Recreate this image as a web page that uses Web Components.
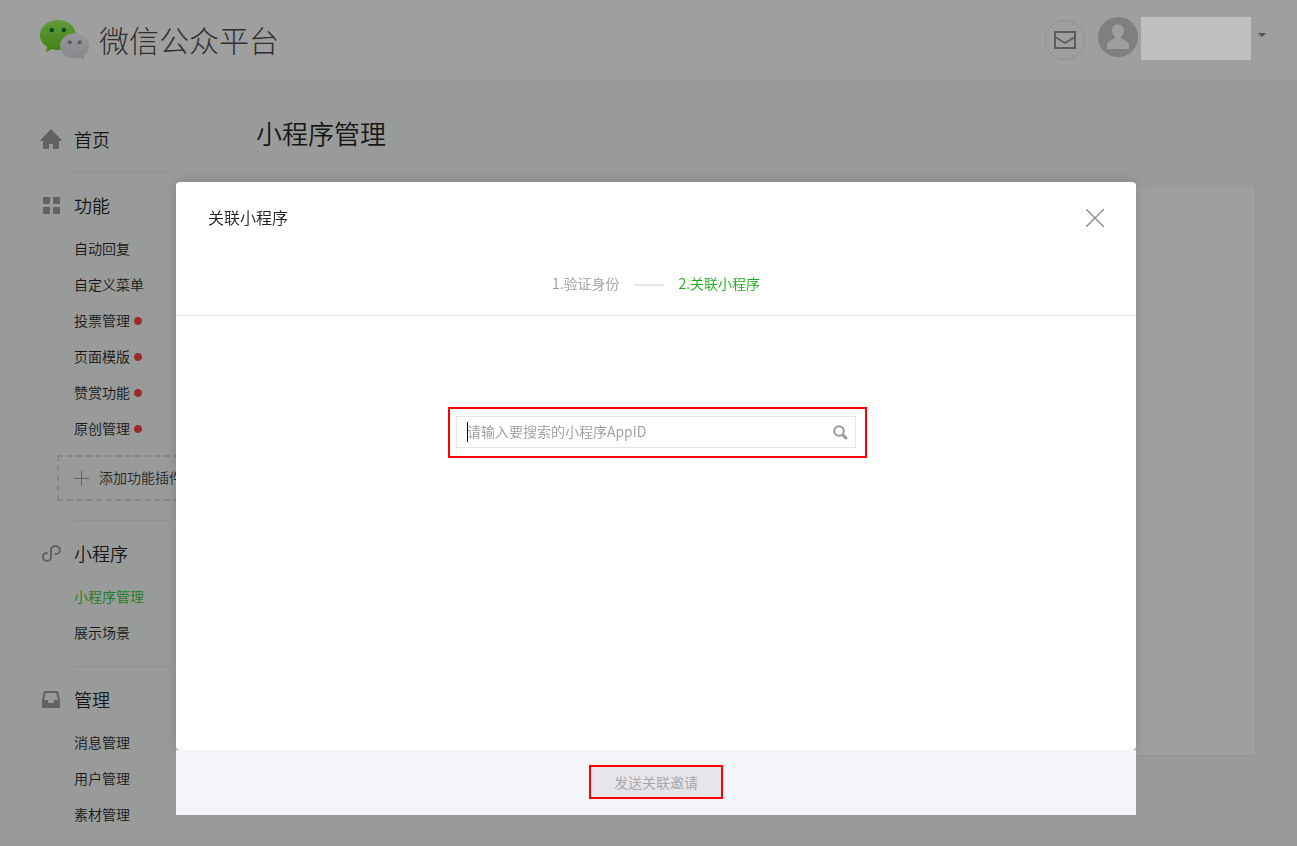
<!DOCTYPE html>
<html lang="zh-CN">
<head>
<meta charset="UTF-8">
<meta name="viewport" content="width=device-width, initial-scale=1">
<title>微信公众平台</title>
<style>
  :root {
    --page: #999b9a;
    --surface: #9f9f9f;
    --line: #8f9190;
    --icon: #616262;
    --text: #161616;
    --green: #1aad19;
    --mark: #f00;
  }

  body {
    margin: 0;
    min-height: 100vh;
    background: var(--page);
    color: var(--text);
    font: 350 14px/20px "Noto Sans CJK SC", "Noto Sans", sans-serif;
  }
</style>
</head>
<body>
<mp-app></mp-app>

<script>
const define = (name, html) => {
  const template = document.createElement('template');
  template.innerHTML = html;

  customElements.define(name, class extends HTMLElement {
    constructor() {
      super();
      this.attachShadow({ mode: 'open' }).appendChild(template.content.cloneNode(true));
    }
  });
};

// --- Header ---
define('mp-logo', `
  <style>
    :host { display: block; }
    a {
      display: flex;
      align-items: center;
      gap: 9px;
      color: #303030;
      font-size: 30px;
      font-weight: 300;
      line-height: 40px;
      text-decoration: none;
    }
    span { padding-bottom: 2px; }
    svg { display: block; }
  </style>
  <a href="#">
    <svg width="50" height="44" viewBox="0 0 50 44" aria-hidden="true">
      <defs>
        <linearGradient id="green" x1="0" y1="0" x2="0" y2="1">
          <stop offset="0" stop-color="#619a3b"/>
          <stop offset="1" stop-color="#428113"/>
        </linearGradient>
        <linearGradient id="gray" x1="0" y1="0" x2="0" y2="1">
          <stop offset="0" stop-color="#95979a"/>
          <stop offset="1" stop-color="#85878a"/>
        </linearGradient>
      </defs>
      <path fill="url(#green)" d="M18 2C8 2 0 8.500 0 17c0 5 2.700 9 7 11.800L6 34l6-3c2 .6 4 1 6 1 10 0 17.800-6.500 17.800-15S28 2 18 2z"/>
      <path fill="url(#gray)" d="M34.600 15.300c-8 0-14.600 5.500-14.600 12.500s6.600 12.500 14.600 12.500c2 0 3.700-.3 5.300-.9l4.800 2.600-1-4.200c3.500-2.400 5.600-6 5.600-10 0-7-6.500-12.500-14.700-12.500z"/>
      <g fill="#064c1c"><circle cx="11.800" cy="12" r="2.200"/><circle cx="23.800" cy="12" r="2.200"/></g>
      <g fill="#5a5c5f"><circle cx="29.800" cy="24.200" r="2"/><circle cx="39.700" cy="24.200" r="2"/></g>
    </svg>
    <span>微信公众平台</span>
  </a>
`);

define('mp-account', `
  <style>
    :host { display: flex; align-items: center; gap: 13px; }
    button { border: 0; padding: 0; background: none; color: inherit; cursor: pointer; }
    svg { display: block; }
    .mail {
      box-sizing: border-box;
      width: 40px;
      height: 40px;
      display: grid;
      place-items: center;
      border: 1px solid #8f8f8f;
      border-radius: 50%;
    }
    .account { display: flex; align-items: flex-start; height: 46px; }
    .name { width: 110px; height: 43px; margin: 0 7px 0 3px; background: #bfbfbf; }
    .arrow { margin-top: 16px; border: 4px solid transparent; border-top-color: #505050; border-bottom: 0; }
  </style>
  <button class="mail" aria-label="通知">
    <svg width="22" height="18" viewBox="0 0 22 18" fill="none" stroke="#5c5c5c" stroke-width="2">
      <path d="M1 1h20v16H1z"/>
      <path d="M1 6l10 6 10-6" stroke-width="1.800"/>
    </svg>
  </button>
  <button class="account" aria-label="帐号">
    <svg width="40" height="40" viewBox="0 0 40 40">
      <circle cx="20" cy="20" r="20" fill="#7f7f7f"/>
      <path fill="#9f9f9f" d="M9 32v-3c0-4 3-5.500 8-7.500v-1.800c-1.700-1.500-3-3.500-3-6.200 0-3.500 2.500-6 6-6s6 2.500 6 6c0 2.700-1.300 4.700-3 6.200v1.800c5 2 8 3.500 8 7.500v3z"/>
    </svg>
    <span class="name"></span>
    <span class="arrow"></span>
  </button>
`);

define('mp-header', `
  <style>
    :host {
      display: flex;
      align-items: center;
      justify-content: space-between;
      height: 80px;
      padding: 0 31px 0 40px;
      background: var(--surface);
      box-shadow: 0 1px 2px rgba(0, 0, 0, 0.03);
    }
  </style>
  <mp-logo></mp-logo>
  <mp-account></mp-account>
`);

// --- Side navigation ---
define('mp-section', `
  <style>
    :host { display: block; padding: 16px 0 0 34px; }
    h2 {
      display: flex;
      align-items: center;
      height: 34px;
      margin: 0 0 0 -34px;
      font-size: 18px;
      font-weight: 350;
    }
    .icon { display: flex; width: 34px; color: var(--icon); }
    .title { padding-bottom: 2px; }
    .rule { border-bottom: 1px solid var(--line); padding-top: 15px; }
    :host(:last-child) .rule { display: none; }
  </style>
  <h2>
    <span class="icon"><slot name="icon"></slot></span>
    <span class="title"><slot name="title"></slot></span>
  </h2>
  <slot></slot>
  <div class="rule"></div>
`);

define('mp-links', `
  <style>
    :host { display: block; padding-top: 8px; }
    nav { display: flex; flex-direction: column; }
    ::slotted(a) {
      box-sizing: border-box;
      display: flex;
      align-items: center;
      height: 36px;
      padding-bottom: 2px;
      color: inherit;
      text-decoration: none;
    }
    ::slotted(a.current) { color: #187b22; }
    ::slotted(a.new) { background: radial-gradient(circle at 64px 18px, #9c2a2a 3.500px, transparent 4.500px); }
  </style>
  <nav><slot></slot></nav>
`);

define('mp-add', `
  <style>
    :host { display: block; margin: 8px 0 4px -17px; }
    button {
      box-sizing: border-box;
      display: flex;
      align-items: center;
      gap: 10px;
      width: 152px;
      height: 46px;
      padding: 0 15px;
      border: 2px dashed #858786;
      background: none;
      color: #272727;
      font: inherit;
      white-space: nowrap;
    }
    span { padding-bottom: 2px; }
    svg { flex: none; }
  </style>
  <button>
    <svg width="15" height="15" viewBox="0 0 15 15" stroke="#626464"><path d="M7.500 0v15M0 7.500h15"/></svg>
    <span><slot></slot></span>
  </button>
`);

define('mp-sidebar', `
  <style>
    :host { display: block; padding: 27px 0 13px 40px; }
  </style>
  <mp-section>
    <svg slot="icon" width="22" height="22" viewBox="0 0 22 22" fill="currentColor">
      <path d="M11 0L.5 11c0 .6.300 1 1 1H3v7c0 .6.400 1 1 1h5v-5h4v5h5c.6 0 1-.4 1-1v-7h1.500c.7 0 1-.4 1-1z"/>
    </svg>
    <span slot="title">首页</span>
  </mp-section>
  <mp-section>
    <svg slot="icon" width="22" height="22" viewBox="0 0 22 22" fill="currentColor">
      <rect x="3" y="2" width="7" height="7" rx="1"/><rect x="13" y="2" width="7" height="7" rx="1"/>
      <rect x="3" y="12" width="7" height="7" rx="1"/><rect x="13" y="12" width="7" height="7" rx="1"/>
    </svg>
    <span slot="title">功能</span>
    <mp-links>
      <a href="#">自动回复</a>
      <a href="#">自定义菜单</a>
      <a href="#" class="new">投票管理</a>
      <a href="#" class="new">页面模版</a>
      <a href="#" class="new">赞赏功能</a>
      <a href="#" class="new">原创管理</a>
    </mp-links>
    <mp-add>添加功能插件</mp-add>
  </mp-section>
  <mp-section>
    <svg slot="icon" width="22" height="22" viewBox="0 0 22 22" fill="none" stroke="currentColor" stroke-width="2" stroke-linecap="round">
      <path d="M7 10c-2.300 0-4 1.500-4 3.700S4.800 18 7 18s4-1.700 4-4V7c0-2.300 1.800-4 4.200-4S20 4.700 20 6.900 18 11 15.500 11"/>
    </svg>
    <span slot="title">小程序</span>
    <mp-links>
      <a href="#" class="current">小程序管理</a>
      <a href="#">展示场景</a>
    </mp-links>
  </mp-section>
  <mp-section>
    <svg slot="icon" width="22" height="22" viewBox="0 0 22 22" fill="currentColor">
      <path fill-rule="evenodd" d="M5 2h12c.6 0 1 .3 1.200.8L20 11v7c0 .6-.4 1-1 1H3c-.6 0-1-.4-1-1v-7l1.800-8.200C4 2.300 4.400 2 5 2zm.800 2L4 11h4v2c0 .6.400 1 1 1h4c.6 0 1-.4 1-1v-2h4l-1.800-7z"/>
    </svg>
    <span slot="title">管理</span>
    <mp-links>
      <a href="#">消息管理</a>
      <a href="#">用户管理</a>
      <a href="#">素材管理</a>
    </mp-links>
  </mp-section>
`);

// --- Page content behind the dialog ---
define('mp-content', `
  <style>
    :host { display: flex; flex-direction: column; padding: 33px 42px 91px 87px; }
    h1 { margin: 0 0 34px; font-size: 26px; line-height: 40px; font-weight: 350; }
    .panel {
      flex: 1;
      border-radius: 3px;
      background: var(--surface);
      box-shadow: 0 1px 3px rgba(0, 0, 0, 0.06);
    }
  </style>
  <h1>小程序管理</h1>
  <div class="panel"></div>
`);

// --- Dialog ---
// Red frame laid over whatever it wraps
define('mp-mark', `
  <style>
    :host { display: block; position: relative; }
    .frame {
      position: absolute;
      inset: var(--mark-inset, -2px);
      border: 2px solid var(--mark);
      pointer-events: none;
    }
  </style>
  <slot></slot>
  <div class="frame"></div>
`);

define('mp-steps', `
  <style>
    :host { display: block; }
    ol {
      display: flex;
      align-items: center;
      justify-content: center;
      margin: 0;
      padding: 0;
      list-style: none;
      color: #9a9a9a;
    }
    .current { color: var(--green); }
    .current::before {
      content: "";
      display: inline-block;
      width: 30px;
      height: 2px;
      margin: 0 15px 0 14px;
      background: #e4e8eb;
      vertical-align: middle;
    }
  </style>
  <ol>
    <li>1.验证身份</li>
    <li class="current" aria-current="step">2.关联小程序</li>
  </ol>
`);

define('mp-search', `
  <style>
    :host { display: block; }
    form {
      position: relative;
      box-sizing: border-box;
      display: flex;
      align-items: center;
      height: 32px;
      border: 1px solid #e4e5ea;
      background: #fff;
    }
    input {
      flex: 1;
      min-width: 0;
      padding: 0 10px 2px;
      border: 0;
      outline: 0;
      background: none;
      color: #222;
      font: inherit;
    }
    input::placeholder { color: #9a9a9a; opacity: 1; }
    .cursor { position: absolute; left: 10px; top: 5px; width: 1px; height: 20px; background: #000; }
    button { display: flex; padding: 0 7px; border: 0; background: none; }
  </style>
  <form>
    <input type="text" aria-label="小程序AppID" placeholder="请输入要搜索的小程序AppID">
    <span class="cursor"></span>
    <button type="button" aria-label="搜索">
      <svg width="15" height="15" viewBox="0 0 15 15" fill="none" stroke="#999">
        <circle cx="6" cy="6" r="4.800" stroke-width="2"/>
        <path d="M9.500 9.500l1.500 1.500" stroke-width="2"/>
        <path d="M11 11l2 2" stroke-width="3" stroke-linecap="round"/>
      </svg>
    </button>
  </form>
`);

define('mp-dialog', `
  <style>
    :host {
      position: fixed;
      inset: 0;
      display: flex;
      align-items: flex-start;
      justify-content: center;
      padding: 182px 0 0 15px;
    }
    section { width: 100%; max-width: 960px; }
    .body {
      min-height: 568px;
      border-radius: 4px;
      background: #fff;
      box-shadow: 0 0 12px rgba(0, 0, 0, 0.15);
    }
    header {
      display: flex;
      align-items: center;
      justify-content: space-between;
      height: 72px;
      padding: 0 32px;
    }
    h3 { margin: 0; padding-bottom: 2px; font-size: 16px; font-weight: 350; color: #222; }
    .close { display: flex; padding: 0; border: 0; background: none; }
    mp-steps { padding: 19px 0 22px; border-bottom: 1px solid #e4e5ea; }
    .field { width: 400px; max-width: 90%; margin: 100px auto 0; --mark-inset: -9px -11px -10px -8px; }
    footer {
      position: relative;
      box-sizing: border-box;
      display: flex;
      justify-content: center;
      padding: 17px 0 18px;
      background: #f4f5f9;
    }
    .send {
      display: block;
      width: 130px;
      height: 30px;
      padding: 0;
      border: 0;
      background: #e6e5ea;
      color: #a3a3a8;
      font: inherit;
    }
  </style>
  <section role="dialog" aria-labelledby="title">
    <div class="body">
      <header>
        <h3 id="title">关联小程序</h3>
        <button class="close" aria-label="关闭">
          <svg width="18" height="18" viewBox="0 0 18 18" stroke="#8c8c8c" stroke-width="1.400"><path d="M0 0l18 18M18 0L0 18"/></svg>
        </button>
      </header>
      <mp-steps></mp-steps>
      <mp-mark class="field"><mp-search></mp-search></mp-mark>
    </div>
    <footer>
      <mp-mark><button class="send" disabled>发送关联邀请</button></mp-mark>
    </footer>
  </section>
`);

define('mp-app', `
  <style>
    :host { display: block; }
    main { display: grid; grid-template-columns: 169px 1fr; }
  </style>
  <mp-header></mp-header>
  <main>
    <mp-sidebar></mp-sidebar>
    <mp-content></mp-content>
  </main>
  <mp-dialog></mp-dialog>
`);
</script>
</body>
</html>
